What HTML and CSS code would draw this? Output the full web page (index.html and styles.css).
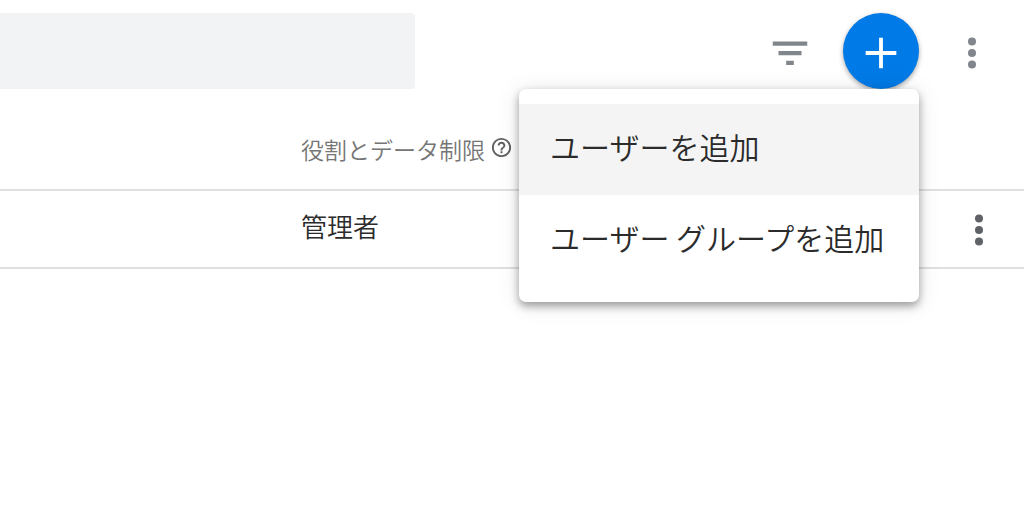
FILE: index.html
```html
<!DOCTYPE html>
<html lang="ja">
<head>
<meta charset="utf-8">
<meta name="viewport" content="width=device-width, initial-scale=1">
<title>ユーザー管理</title>
<link rel="stylesheet" href="styles.css">
</head>
<body>
<header class="toolbar">
  <input class="search" type="search" aria-label="検索">
  <div class="actions">
    <button class="icon-button" type="button" aria-label="フィルタ">
      <svg class="icon" viewBox="0 0 24 24"><path d="M3 6h18v2.2H3zM6 11h12v2.2H6zM10 16h4v2.2h-4z"/></svg>
    </button>
    <div class="add">
      <button class="fab" type="button" aria-label="追加" aria-haspopup="menu" aria-expanded="true">
        <svg class="icon" viewBox="0 0 24 24"><path d="M11 4h2v7h7v2h-7v7h-2v-7H4v-2h7z"/></svg>
      </button>
      <div class="menu" role="menu">
        <button class="menu-item active" type="button" role="menuitem">ユーザーを追加</button>
        <button class="menu-item" type="button" role="menuitem">ユーザー グループを追加</button>
      </div>
    </div>
    <button class="icon-button" type="button" aria-label="その他">
      <svg class="icon" viewBox="0 0 24 24"><circle cx="12" cy="6" r="2.1"/><circle cx="12" cy="12" r="2.1"/><circle cx="12" cy="18" r="2.1"/></svg>
    </button>
  </div>
</header>
<table class="users">
  <thead>
    <tr>
      <td class="name"></td>
      <th scope="col">
        <span class="heading">役割とデータ制限
          <svg class="help" viewBox="0 0 24 24" role="img" aria-label="ヘルプ"><path d="M11 18h2v-2h-2v2zm1-16C6.48 2 2 6.48 2 12s4.48 10 10 10 10-4.48 10-10S17.52 2 12 2zm0 18c-4.41 0-8-3.59-8-8s3.59-8 8-8 8 3.59 8 8-3.59 8-8 8zm0-14c-2.21 0-4 1.79-4 4h2c0-1.1.9-2 2-2s2 .9 2 2c0 2-3 1.75-3 5h2c0-2.25 3-2.5 3-5 0-2.21-1.79-4-4-4z"/></svg>
        </span>
      </th>
      <td class="more"></td>
    </tr>
  </thead>
  <tbody>
    <tr>
      <td></td>
      <td class="role">管理者</td>
      <td class="more">
        <button class="row-button" type="button" aria-label="その他の操作">
          <svg class="icon" viewBox="0 0 24 24"><circle cx="12" cy="6" r="2.1"/><circle cx="12" cy="12" r="2.1"/><circle cx="12" cy="18" r="2.1"/></svg>
        </button>
      </td>
    </tr>
  </tbody>
</table>
</body>
</html>
```
FILE: styles.css
```css
* {
  box-sizing: border-box;
}

body {
  min-height: 100vh;
  margin: 0;
  background: #fff;
  color: #2b2b2b;
  font-family: "Noto Sans CJK JP", sans-serif;
  font-weight: 350;
}

button {
  border: 0;
  padding: 0;
  background: none;
  color: inherit;
  font: inherit;
  cursor: pointer;
}

.toolbar {
  display: flex;
  justify-content: space-between;
  padding: 13px 29px 0 0;
}

.search {
  width: 415px;
  height: 76px;
  border: 0;
  border-radius: 0 4px 4px 0;
  padding: 0 24px;
  background: #f1f3f4;
  font: inherit;
  font-size: 26px;
}

.actions {
  display: flex;
  gap: 30px;
}

.icon {
  display: block;
  width: 46px;
  height: 46px;
  fill: currentColor;
}

.icon-button {
  padding-top: 4px;
  color: #80868b;
}

.add {
  position: relative;
}

.fab {
  display: grid;
  place-items: center;
  width: 76px;
  height: 76px;
  border-radius: 50%;
  padding-top: 4px;
  background: #007ae6;
  color: #fff;
  box-shadow: 0 2px 5px rgba(0, 0, 0, 0.35);
}

.menu {
  position: absolute;
  top: 100%;
  right: 0;
  z-index: 1;
  min-width: 400px;
  border-radius: 7px;
  padding: 15px 0 16px;
  background: #fff;
  box-shadow: 0 4px 8px rgba(0, 0, 0, 0.36), 0 2px 24px rgba(0, 0, 0, 0.1);
}

.menu-item {
  display: block;
  width: 100%;
  height: 91px;
  padding: 0 31px 8px;
  font-size: 30px;
  text-align: left;
  white-space: nowrap;
}

.menu-item.active {
  background: #f4f4f4;
}

.users {
  width: 100%;
  border-collapse: collapse;
  table-layout: fixed;
}

.users th,
.users td {
  border-bottom: 2px solid #e0e0e0;
  padding: 0;
  text-align: left;
}

.users th {
  height: 101px;
  padding-top: 20px;
  color: #757575;
  font-size: 23px;
  font-weight: 350;
}

.users .name {
  width: 301px;
}

.users .more {
  width: 68px;
}

.heading {
  display: flex;
  gap: 5px;
}

.help {
  width: 23px;
  height: 23px;
  margin-top: 4px;
  fill: #616161;
}

.users .role {
  height: 78px;
  padding-bottom: 8px;
  font-size: 26px;
}

.row-button {
  display: block;
  padding-top: 2px;
  color: #5f6368;
}
```
